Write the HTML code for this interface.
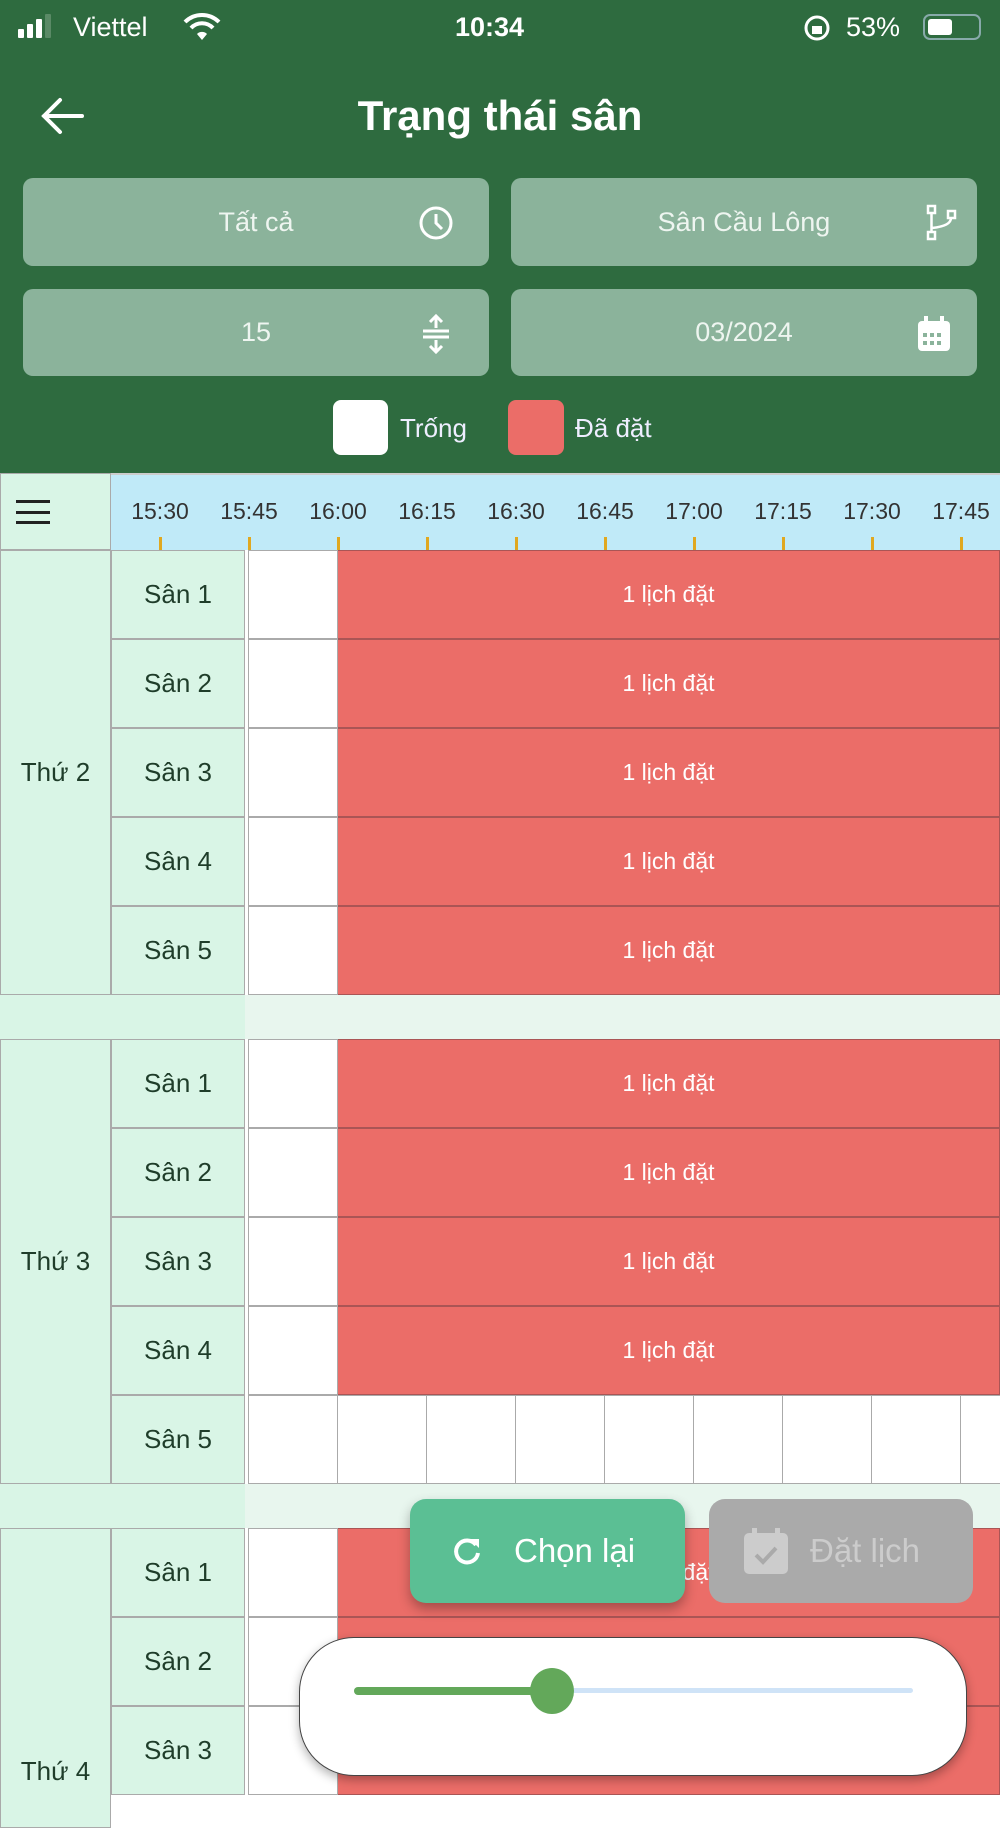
<!DOCTYPE html>
<html><head><meta charset="utf-8"><style>
*{margin:0;padding:0;box-sizing:border-box}
body{width:1000px;height:1778px;overflow:hidden;position:relative;font-family:"Liberation Sans",sans-serif;background:#fff;color:#1f3d2a}
.a{position:absolute}
.hdr{left:0;top:0;width:1000px;height:473px;background:#2e6b3f}
.sb{color:#fff;font-size:27px;top:12px}
.btn{background:#8bb39b;border-radius:10px;color:#eef5f0;font-size:27px;display:flex;align-items:center;justify-content:center}
.th{top:473px;left:0;width:1000px;height:77px;background:#c0eaf8;border-top:2px solid #ccc}
.tl{top:498px;font-size:23px;color:#333;width:70px;text-align:center}
.tk{top:537px;width:3px;height:13px;background:#e0a820}
.day{left:0;width:111px;background:#d9f5e6;border:1px solid #aaa;display:flex;align-items:center;justify-content:center;font-size:26px}
.san{left:111px;width:134px;height:89px;background:#d9f5e6;border:1px solid #aaa;display:flex;align-items:center;justify-content:center;font-size:26px}
.w{left:248px;width:90px;height:89px;background:#fff;border:1px solid #aaa}
.r{left:338px;width:662px;height:89px;background:#eb6d68;border:1px solid #a55;border-left:none;display:flex;align-items:center;justify-content:center;color:#fff;font-size:23px}
.gap{left:0;width:1000px;height:44px;background:#e8f6ee}
.gl{left:0;width:245px;height:44px;background:#d9f5e6}
</style></head><body>
<div class="a hdr"></div>
<div class="a sb" style="left:18px;top:14px"><svg width="34" height="24"><rect x="0" y="15" width="6" height="9" rx="1" fill="#fff"/><rect x="9" y="10" width="6" height="14" rx="1" fill="#fff"/><rect x="18" y="5" width="6" height="19" rx="1" fill="#fff"/><rect x="27" y="0" width="6" height="24" rx="1" fill="#5a8a66"/></svg></div>
<div class="a sb" style="left:73px">Viettel</div>
<div class="a sb" style="left:182px;top:12px"><svg width="40" height="30" viewBox="0 0 40 30"><path d="M3 10 A24 24 0 0 1 37 10" stroke="#fff" stroke-width="4" fill="none"/><path d="M9 16 A15 15 0 0 1 31 16" stroke="#fff" stroke-width="4" fill="none"/><path d="M15 22 A7 7 0 0 1 25 22 L20 28Z" fill="#fff"/></svg></div>
<div class="a sb" style="left:455px;font-weight:bold">10:34</div>
<div class="a sb" style="left:803px;top:14px"><svg width="28" height="28"><circle cx="14" cy="14" r="11" stroke="#fff" stroke-width="3" fill="none"/><rect x="9" y="12" width="10" height="8" fill="#fff"/></svg></div>
<div class="a sb" style="left:846px">53%</div>
<div class="a" style="left:923px;top:14px;width:58px;height:26px;border:2px solid #8aa;border-radius:7px"><div style="margin:3px;width:24px;height:16px;background:#fff;border-radius:3px"></div></div>

<div class="a" style="left:40px;top:96px"><svg width="46" height="40"><path d="M4 20 H42 M20 4 L4 20 L20 36" stroke="#fff" stroke-width="4" fill="none" stroke-linecap="round"/></svg></div>
<div class="a" style="left:0;width:1000px;top:92px;text-align:center;color:#fff;font-size:42px;font-weight:bold">Trạng thái sân</div>

<div class="a btn" style="left:23px;top:178px;width:466px;height:88px">Tất cả</div>
<div class="a" style="left:418px;top:205px"><svg width="36" height="36"><circle cx="18" cy="18" r="15" stroke="#fff" stroke-width="3" fill="none"/><path d="M18 9 V18 L24 24" stroke="#fff" stroke-width="3" fill="none"/></svg></div>
<div class="a btn" style="left:511px;top:178px;width:466px;height:88px">Sân Cầu Lông</div>
<div class="a" style="left:926px;top:204px"><svg width="32" height="38"><rect x="2" y="2" width="7" height="7" stroke="#fff" stroke-width="2.5" fill="none"/><rect x="22" y="7" width="7" height="7" stroke="#fff" stroke-width="2.5" fill="none"/><rect x="2" y="28" width="7" height="7" stroke="#fff" stroke-width="2.5" fill="none"/><path d="M5.5 9 V28 M25 14 Q25 22 6 24" stroke="#fff" stroke-width="2.5" fill="none"/></svg></div>
<div class="a btn" style="left:23px;top:289px;width:466px;height:87px">15</div>
<div class="a" style="left:420px;top:314px"><svg width="32" height="40"><path d="M16 2 V14 M10 8 L16 2 L22 8 M3 17 H29 M3 23 H29 M16 26 V38 M10 32 L16 38 L22 32" stroke="#fff" stroke-width="3" fill="none"/></svg></div>
<div class="a btn" style="left:511px;top:289px;width:466px;height:87px">03/2024</div>
<div class="a" style="left:917px;top:316px"><svg width="34" height="36"><rect x="1" y="5" width="32" height="30" rx="4" fill="#fff"/><rect x="7" y="0" width="4" height="8" fill="#fff"/><rect x="23" y="0" width="4" height="8" fill="#fff"/><g fill="#8bb39b"><rect x="6" y="17" width="4" height="4"/><rect x="13" y="17" width="4" height="4"/><rect x="20" y="17" width="4" height="4"/><rect x="6" y="25" width="4" height="4"/><rect x="13" y="25" width="4" height="4"/><rect x="20" y="25" width="4" height="4"/></g></svg></div>

<div class="a" style="left:333px;top:400px;width:55px;height:55px;background:#fff;border-radius:8px"></div>
<div class="a" style="left:400px;top:413px;color:#eef;font-size:26px">Trống</div>
<div class="a" style="left:508px;top:400px;width:56px;height:55px;background:#eb6d68;border-radius:8px"></div>
<div class="a" style="left:575px;top:413px;color:#eef;font-size:26px">Đã đặt</div>

<div class="a th"></div>
<div class="a" style="left:0;top:473px;width:111px;height:77px;background:#d9f5e6;border:1px solid #aaa"></div>
<div class="a" style="left:16px;top:500px;width:34px;height:24px;border-top:3px solid #222;border-bottom:3px solid #222"><div style="margin-top:8px;height:3px;background:#222"></div></div>
<div class="a tl" style="left:125px">15:30</div><div class="a tk" style="left:159px"></div>
<div class="a tl" style="left:214px">15:45</div><div class="a tk" style="left:248px"></div>
<div class="a tl" style="left:303px">16:00</div><div class="a tk" style="left:337px"></div>
<div class="a tl" style="left:392px">16:15</div><div class="a tk" style="left:426px"></div>
<div class="a tl" style="left:481px">16:30</div><div class="a tk" style="left:515px"></div>
<div class="a tl" style="left:570px">16:45</div><div class="a tk" style="left:604px"></div>
<div class="a tl" style="left:659px">17:00</div><div class="a tk" style="left:693px"></div>
<div class="a tl" style="left:748px">17:15</div><div class="a tk" style="left:782px"></div>
<div class="a tl" style="left:837px">17:30</div><div class="a tk" style="left:871px"></div>
<div class="a tl" style="left:926px">17:45</div><div class="a tk" style="left:960px"></div>

<div class="a day" style="top:550px;height:445px">Thứ 2</div>
<div class="a san" style="top:550px">Sân 1</div><div class="a w" style="top:550px"></div><div class="a r" style="top:550px">1 lịch đặt</div>
<div class="a san" style="top:639px">Sân 2</div><div class="a w" style="top:639px"></div><div class="a r" style="top:639px">1 lịch đặt</div>
<div class="a san" style="top:728px">Sân 3</div><div class="a w" style="top:728px"></div><div class="a r" style="top:728px">1 lịch đặt</div>
<div class="a san" style="top:817px">Sân 4</div><div class="a w" style="top:817px"></div><div class="a r" style="top:817px">1 lịch đặt</div>
<div class="a san" style="top:906px">Sân 5</div><div class="a w" style="top:906px"></div><div class="a r" style="top:906px">1 lịch đặt</div>
<div class="a gap" style="top:995px"></div><div class="a gl" style="top:995px"></div>

<div class="a day" style="top:1039px;height:445px">Thứ 3</div>
<div class="a san" style="top:1039px">Sân 1</div><div class="a w" style="top:1039px"></div><div class="a r" style="top:1039px">1 lịch đặt</div>
<div class="a san" style="top:1128px">Sân 2</div><div class="a w" style="top:1128px"></div><div class="a r" style="top:1128px">1 lịch đặt</div>
<div class="a san" style="top:1217px">Sân 3</div><div class="a w" style="top:1217px"></div><div class="a r" style="top:1217px">1 lịch đặt</div>
<div class="a san" style="top:1306px">Sân 4</div><div class="a w" style="top:1306px"></div><div class="a r" style="top:1306px">1 lịch đặt</div>
<div class="a san" style="top:1395px">Sân 5</div>
<div class="a" style="top:1395px;left:248px;width:752px;height:89px;border-top:1px solid #aaa;border-bottom:1px solid #aaa;background:repeating-linear-gradient(90deg,#aaa 0 1px,#fff 1px 89px)"></div>
<div class="a gap" style="top:1484px"></div><div class="a gl" style="top:1484px"></div>

<div class="a day" style="top:1528px;height:300px;align-items:flex-end;padding-bottom:40px">Thứ 4</div>
<div class="a san" style="top:1528px">Sân 1</div><div class="a w" style="top:1528px"></div><div class="a r" style="top:1528px">1 lịch đặt</div>
<div class="a san" style="top:1617px">Sân 2</div><div class="a w" style="top:1617px"></div><div class="a r" style="top:1617px"></div>
<div class="a san" style="top:1706px">Sân 3</div><div class="a w" style="top:1706px"></div><div class="a r" style="top:1706px;align-items:flex-start;padding-top:42px">1 lịch đặt</div>

<div class="a" style="left:410px;top:1499px;width:275px;height:104px;background:#5bbf94;border-radius:16px;box-shadow:0 6px 12px rgba(0,0,0,.3);display:flex;align-items:center;color:#fff;font-size:33px">
<svg style="margin-left:42px;margin-right:32px" width="30" height="32"><path d="M24 10 A11 11 0 1 0 26 18" stroke="#fff" stroke-width="4" fill="none"/><path d="M18 4 L27 4 L27 13Z" fill="#fff"/></svg>Chọn lại</div>
<div class="a" style="left:709px;top:1499px;width:264px;height:104px;background:#aaa;border-radius:16px;display:flex;align-items:center;color:#ccc;font-size:33px">
<svg style="margin-left:35px;margin-right:22px" width="44" height="46"><rect x="0" y="5" width="44" height="41" rx="5" fill="#ccc"/><rect x="8" y="0" width="5" height="9" fill="#ccc"/><rect x="31" y="0" width="5" height="9" fill="#ccc"/><path d="M12 27 L19 34 L32 20" stroke="#aaa" stroke-width="4" fill="none"/></svg>Đặt lịch</div>

<div class="a" style="left:299px;top:1637px;width:668px;height:139px;background:#fff;border-radius:55px;border:1px solid #444;box-shadow:0 4px 10px rgba(0,0,0,.3)"></div>
<div class="a" style="left:354px;top:1688px;width:559px;height:5px;background:#cfe3f7;border-radius:3px"></div>
<div class="a" style="left:354px;top:1687px;width:200px;height:8px;background:#63a85a;border-radius:4px"></div>
<div class="a" style="left:530px;top:1668px;width:44px;height:46px;background:#63a85a;border-radius:50%"></div>
</body></html>
